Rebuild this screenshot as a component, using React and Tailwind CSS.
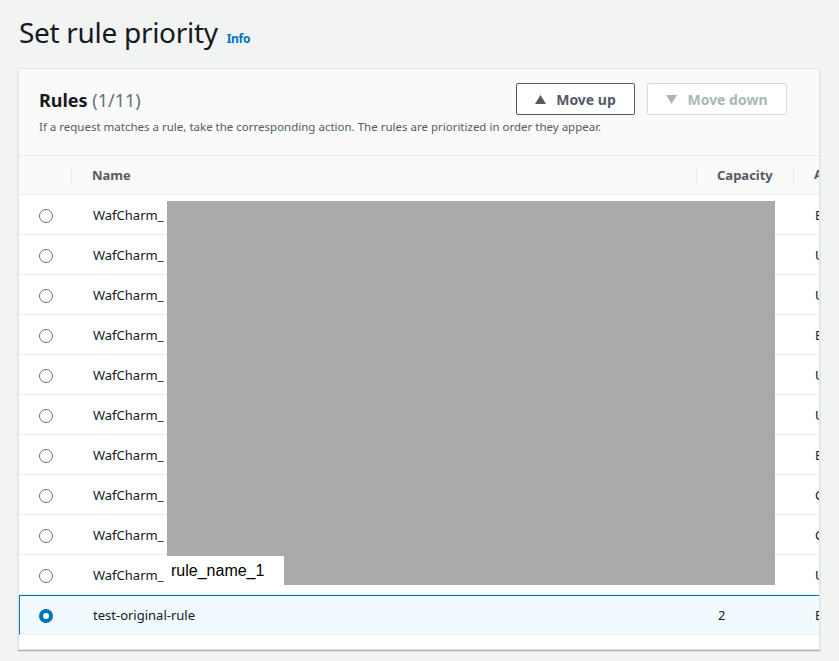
import React from "react";

const rows = [
  { name: "WafCharm_", a: "E" },
  { name: "WafCharm_", a: "U" },
  { name: "WafCharm_", a: "U" },
  { name: "WafCharm_", a: "E" },
  { name: "WafCharm_", a: "U" },
  { name: "WafCharm_", a: "U" },
  { name: "WafCharm_", a: "E" },
  { name: "WafCharm_", a: "C" },
  { name: "WafCharm_", a: "C" },
  { name: "WafCharm_", a: "U" },
];

function Radio({ checked }) {
  if (checked) {
    return (
      <span className="block w-[14px] h-[14px] rounded-full border-[4px] border-[#0073bb] bg-white" />
    );
  }
  return <span className="block w-[14px] h-[14px] rounded-full border border-[#687078] bg-white" />;
}

function Tri({ down, color }) {
  return (
    <svg width="11" height="9" viewBox="0 0 11 9">
      {down ? <polygon points="0,0 11,0 5.5,9" fill={color} /> : <polygon points="0,9 11,9 5.5,0" fill={color} />}
    </svg>
  );
}

export default function App() {
  return (
    <div className="min-h-[661px] w-[839px] bg-[#f2f3f3] overflow-hidden" style={{ fontFamily: '"Noto Sans", "Open Sans", sans-serif' }}>
      <div className="flex items-baseline gap-[9px] pl-[19px] pt-[14px] h-[68px]">
        <h1 className="text-[28px] leading-[36px] text-[#16191f] font-normal tracking-[-0.3px]">Set rule priority</h1>
        <span className="text-[12px] font-bold text-[#0073bb] tracking-[-0.3px]">Info</span>
      </div>
      <div className="relative ml-[18px] w-[802px] h-[582px] bg-white border border-[#e4e6e6] shadow-[0_1px_1px_rgba(0,28,36,0.3)] overflow-hidden">
        <div className="bg-[#fafafa] h-[87px] border-b border-[#eaeded] pl-[20px] pr-[32px] pt-[14px]">
          <div className="flex justify-between items-center h-[32px]">
            <h2 className="text-[18px] leading-[24px] font-bold text-[#16191f] pt-[2px]">
              Rules <span className="font-normal text-[#687078]">(1/11)</span>
            </h2>
            <div className="flex gap-[12px]">
              <button className="h-[32px] w-[119px] flex items-center justify-center gap-[10px] border border-[#545b64] rounded-[2px] bg-white text-[14px] font-bold text-[#545b64]">
                <Tri color="#545b64" />Move up
              </button>
              <button className="h-[32px] w-[140px] flex items-center justify-center gap-[10px] border border-[#d5dbdb] rounded-[2px] bg-white text-[14px] font-bold text-[#aab7b8]">
                <Tri down color="#aab7b8" />Move down
              </button>
            </div>
          </div>
          <p className="mt-[4px] text-[11.5px] leading-[16px] text-[#545b64] whitespace-nowrap">
            If a request matches a rule, take the corresponding action. The rules are prioritized in order they appear.
          </p>
        </div>
        <div className="w-[900px]">
          <div className="flex h-[39px] items-center bg-[#fafafa] border-b border-[#eaeded] text-[13px] font-bold text-[#545b64]">
            <div className="w-[53px] h-[20px] border-r border-[#eaeded]" />
            <div className="w-[625px] pl-[20px] h-[20px] leading-[20px] border-r border-[#eaeded]">Name</div>
            <div className="w-[97px] pl-[20px] h-[20px] leading-[20px] border-r border-[#eaeded]">Capacity</div>
            <div className="pl-[20px]">Action</div>
          </div>
          {rows.map((r, i) => (
            <div key={i} className="flex h-[40px] items-center border-b border-[#eaeded] text-[13px] text-[#16191f] pt-[2px]">
              <div className="w-[53px] flex justify-center pl-[1px]"><Radio /></div>
              <div className="w-[625px] pl-[21px]">{r.name}</div>
              <div className="w-[97px] pl-[21px]"></div>
              <div className="pl-[21px]">{r.a}</div>
            </div>
          ))}
          <div className="flex h-[40px] items-center border-t border-l border-[#0073bb] border-b-[#eaeded] border-b bg-[#f1faff] text-[13px] text-[#16191f] pt-[2px]">
            <div className="w-[52px] flex justify-center"><Radio checked /></div>
            <div className="w-[625px] pl-[21px]">test-original-rule</div>
            <div className="w-[97px] pl-[21px]">2</div>
            <div className="pl-[21px]">Block</div>
          </div>
        </div>
        <div className="absolute left-[148px] top-[132px] w-[608px] h-[384px] bg-[#aaaaaa]" />
        <div
          className="absolute left-[148px] top-[487px] w-[117px] h-[29px] bg-white text-[16px] leading-[29px] pl-[4px] text-[#000]"
          style={{ fontFamily: '"Liberation Sans", Arial, sans-serif' }}
        >
          rule_name_1
        </div>
      </div>
    </div>
  );
}
